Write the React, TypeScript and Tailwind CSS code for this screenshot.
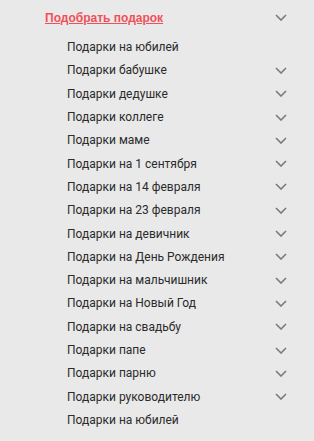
import React from 'react';

const items: { label: string; sub: boolean }[] = [
    { label: 'Подарки на юбилей', sub: false },
    { label: 'Подарки бабушке', sub: true },
    { label: 'Подарки дедушке', sub: true },
    { label: 'Подарки коллеге', sub: true },
    { label: 'Подарки маме', sub: true },
    { label: 'Подарки на 1 сентября', sub: true },
    { label: 'Подарки на 14 февраля', sub: true },
    { label: 'Подарки на 23 февраля', sub: true },
    { label: 'Подарки на девичник', sub: true },
    { label: 'Подарки на День Рождения', sub: true },
    { label: 'Подарки на мальчишник', sub: true },
    { label: 'Подарки на Новый Год', sub: true },
    { label: 'Подарки на свадьбу', sub: true },
    { label: 'Подарки папе', sub: true },
    { label: 'Подарки парню', sub: true },
    { label: 'Подарки руководителю', sub: true },
    { label: 'Подарки на юбилей', sub: false },
];

const Chevron = () => (
    <svg width="12" height="7" viewBox="0 0 12 7" fill="none">
        <polyline points="1,1 6,6 11,1" stroke="#7a7a7a" strokeWidth="1.6" />
    </svg>
);

export default function App() {
    return (
        <div className="w-[314px] h-[441px] bg-[#e8e9e8] font-['Liberation_Sans',Arial,sans-serif] text-[12px]">
            <div className="h-[35.5px] flex items-center pl-[45px] pr-[27px] justify-between">
                <a href="#" className="font-bold text-[#f0505a] underline">Подобрать подарок</a>
                <Chevron />
            </div>
            <ul className="font-['Roboto',sans-serif]">
                {items.map((item, i) => (
                    <li key={i} className="h-[23.3px] flex items-center justify-between pl-[67px] pr-[27px] text-[#2b2b2b]">
                        <span>{item.label}</span>
                        {item.sub && <Chevron />}
                    </li>
                ))}
            </ul>
        </div>
    );
}
